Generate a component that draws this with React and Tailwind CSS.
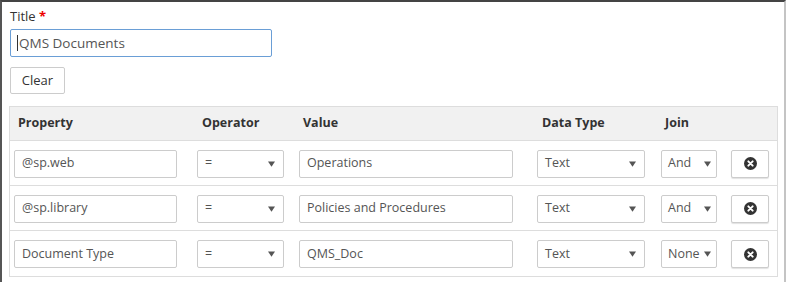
import React from "react";

const F = { fontFamily: '"Open Sans", "Noto Sans", sans-serif' };

function Arrow() {
  return (
    <svg width="7" height="6" viewBox="0 0 8 6" className="shrink-0">
      <path d="M0 0 L8 0 L4 6 Z" fill="#555" />
    </svg>
  );
}

function Input({ value, w }) {
  return (
    <div
      className={`h-[28px] border border-[#cccccc] rounded-[2px] bg-white flex items-center px-[7px] text-[12.5px] text-[#555] ${w}`}
    >
      {value}
    </div>
  );
}

function Select({ value, w, pl = "pl-[7px]", pr = "pr-[8px]" }) {
  return (
    <div
      className={`h-[28px] border border-[#cccccc] rounded-[2px] bg-white flex items-center justify-between ${pl} ${pr} text-[12.5px] text-[#555] ${w}`}
    >
      <span>{value}</span>
      <Arrow />
    </div>
  );
}

function XBtn() {
  return (
    <div className="w-[38px] h-[28px] border border-[#cccccc] rounded-[2px] bg-white shadow-[0_1px_1px_rgba(0,0,0,0.12)] flex items-center justify-center">
      <svg width="13" height="13" viewBox="0 0 12 12">
        <circle cx="6" cy="6" r="6" fill="#333" />
        <path d="M4 4 L8 8 M8 4 L4 8" stroke="#fff" strokeWidth="1.8" strokeLinecap="round" />
      </svg>
    </div>
  );
}

const rows = [
  ["@sp.web", "Operations", "And"],
  ["@sp.library", "Policies and Procedures", "And"],
  ["Document Type", "QMS_Doc", "None"],
];

const grid = "grid grid-cols-[183px_102px_238px_124px_70px_50px]";

export default function App() {
  return (
    <div
      style={F}
      className="w-[786px] h-[282px] bg-white border-t-2 border-t-[#444] border-l-2 border-l-[#555] border-r-2 border-r-[#c4c4c4] overflow-hidden"
    >
      <div className="pl-[8px] pt-[5px]">
        <div className="text-[13px] text-[#333] leading-[18px]">
          Title <span className="text-[#e00] font-bold">*</span>
        </div>
        <div className="mt-[4px] w-[262px] h-[28px] border border-[#6a9ed6] rounded-[2px] flex items-center pl-[6px] text-[13.5px] text-[#555]">
          <span className="w-px h-[16px] bg-[#333] mr-px" />
          QMS Documents
        </div>
        <div className="mt-[10px] w-[55px] h-[27px] border border-[#cccccc] rounded-[2px] bg-white flex items-center justify-center text-[13px] text-[#333]">
          Clear
        </div>
        <div className="mt-[12px] w-[769px] border border-[#dddddd] -ml-px">
          <div className={`${grid} h-[34px] bg-[#f1f1f1] border-b border-[#dddddd] items-center text-[12.5px] font-bold text-[#333]`}>
            <div className="pl-[8px]">Property</div>
            <div className="pl-[9px]">Operator</div>
            <div className="pl-[8px]">Value</div>
            <div className="pl-[9px]">Data Type</div>
            <div className="pl-[8px]">Join</div>
            <div />
          </div>
          {rows.map((r, i) => (
            <div
              key={i}
              className={`${grid} h-[45px] items-center pt-[1px] ${i < 2 ? "border-b border-[#dddddd]" : ""}`}
            >
              <div className="pl-[4px]">
                <Input value={r[0]} w="w-[163px]" />
              </div>
              <div className="pl-[4px]">
                <Select value="=" w="w-[87px]" />
              </div>
              <div className="pl-[4px]">
                <Input value={r[1]} w="w-[214px]" />
              </div>
              <div className="pl-[4px]">
                <Select value="Text" w="w-[108px]" />
              </div>
              <div className="pl-[4px]">
                <Select value={r[2]} w="w-[56px]" pl="pl-[6px]" pr="pr-[5px]" />
              </div>
              <div className="pl-[4px]">
                <XBtn />
              </div>
            </div>
          ))}
        </div>
      </div>
    </div>
  );
}
